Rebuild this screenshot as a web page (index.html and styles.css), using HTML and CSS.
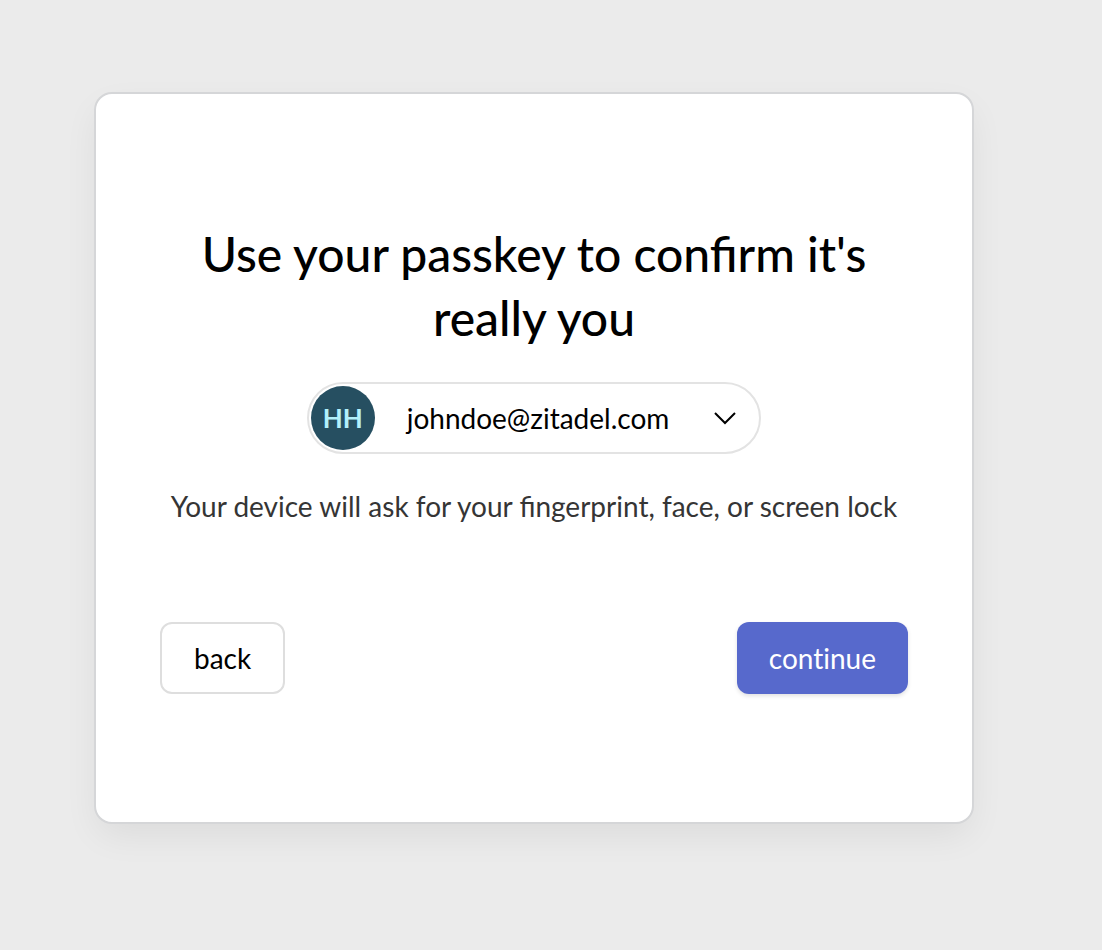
FILE: index.html
```html
<!DOCTYPE html>
<html lang="en">
<head>
<meta charset="utf-8">
<meta name="viewport" content="width=device-width, initial-scale=1">
<title>Confirm with passkey</title>
<link rel="stylesheet" href="styles.css">
</head>
<body>
<main class="card">
  <h1 class="title">Use your passkey to confirm it's really you</h1>
  <button class="account" type="button">
    <span class="avatar">HH</span>
    <span class="login">johndoe@zitadel.com</span>
    <svg class="chevron" viewBox="0 0 24 24" aria-hidden="true"><path d="M2 7l10 10L22 7"/></svg>
  </button>
  <p class="hint">Your device will ask for your fingerprint, face, or screen lock</p>
  <div class="actions">
    <button class="button button-outline" type="button">back</button>
    <button class="button button-primary" type="button">continue</button>
  </div>
</main>
</body>
</html>
```
FILE: styles.css
```css
* {
  box-sizing: border-box;
}

body {
  margin: 0;
  padding: 92px 128px 92px 94px;
  background: #ebebeb;
  color: #000;
  font-family: Lato, sans-serif;
}

.card {
  display: flex;
  flex-direction: column;
  align-items: center;
  max-width: 880px;
  padding: 128px 64px;
  border: 2px solid #d5d6d8;
  border-radius: 18px;
  background: #fff;
  box-shadow: 0 14px 36px -4px rgba(0, 0, 0, 0.07);
}

.title {
  margin: 0 0 32px;
  font-size: 48px;
  font-weight: 500;
  line-height: 64px;
  text-align: center;
}

.account {
  display: flex;
  align-items: center;
  height: 72px;
  padding: 0 22px 0 2px;
  border: 2px solid #e3e3e3;
  border-radius: 36px;
  background: #fff;
  color: inherit;
  font: 28px/40px Lato, sans-serif;
}

.avatar {
  display: grid;
  place-items: center;
  width: 64px;
  height: 64px;
  margin-right: 32px;
  border-radius: 50%;
  background: #264f61;
  color: #b2f0fb;
  font-size: 26px;
  font-weight: 700;
}

.chevron {
  width: 24px;
  height: 24px;
  margin-left: 44px;
  fill: none;
  stroke: #000;
  stroke-width: 2;
}

.hint {
  margin: 32px 0 96px;
  color: #353535;
  font-size: 28px;
  line-height: 40px;
  text-align: center;
}

.actions {
  display: flex;
  justify-content: space-between;
  width: 100%;
}

.button {
  height: 72px;
  padding: 0 32px;
  border: 2px solid #dedede;
  border-radius: 12px;
  background: #fff;
  color: #000;
  font: 28px/40px Lato, sans-serif;
  font-variant-ligatures: none;
}

.button-primary {
  border: 0;
  background: #5769cc;
  color: #fff;
  box-shadow: 0 2px 4px rgba(0, 0, 0, 0.12);
}
```
